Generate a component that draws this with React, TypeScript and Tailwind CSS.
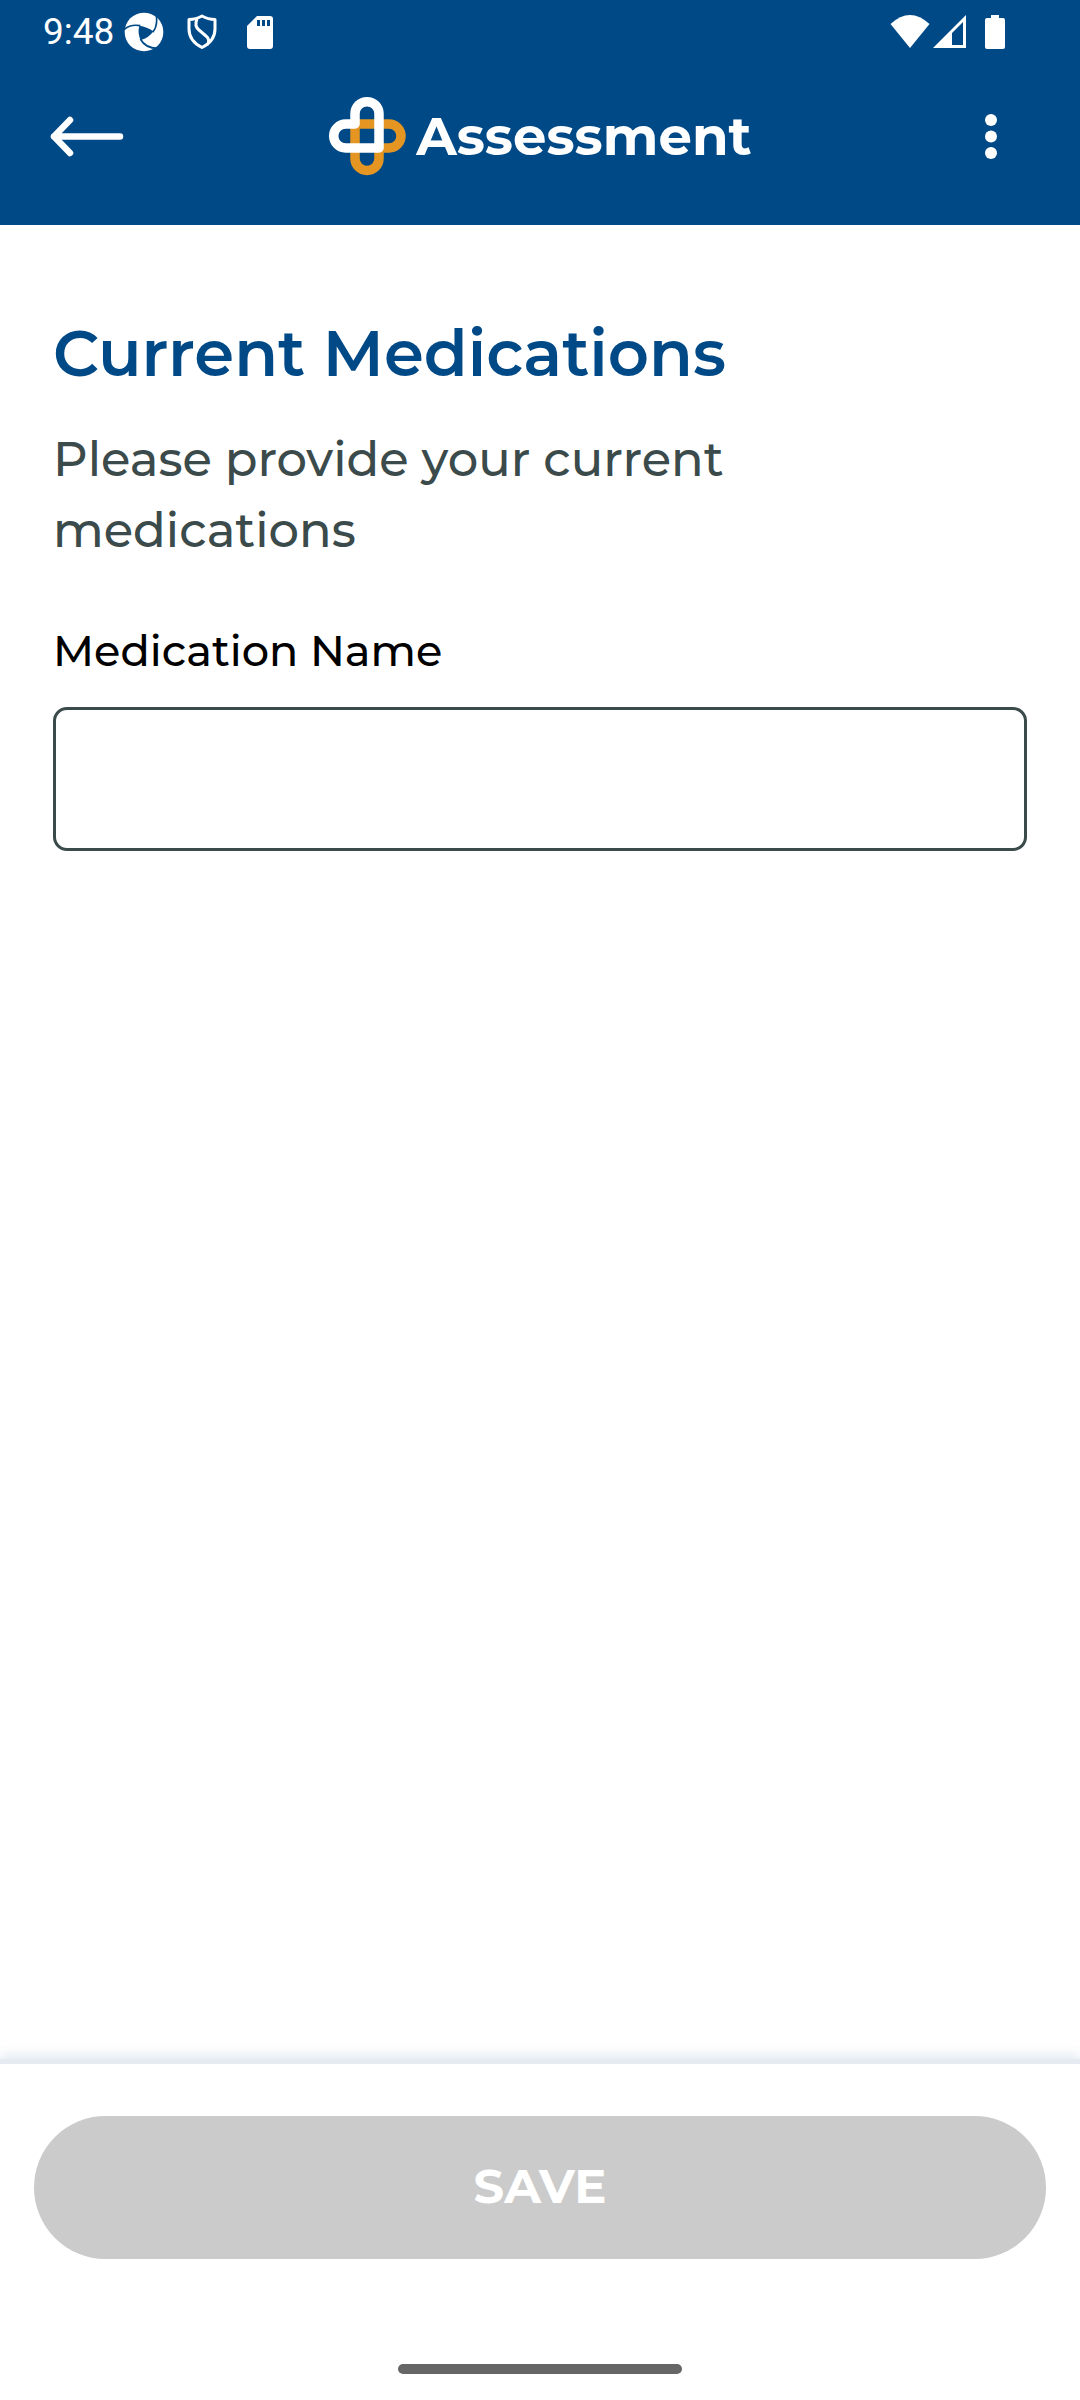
function StatusBar() {
  return (
    <div className="flex h-16 items-center justify-between pl-[43px] pr-[73px]">
      <div className="flex items-center">
        <span className="mr-2.5 font-['Roboto',sans-serif] text-[37px]">9:48</span>
        <svg className="mr-[22px] h-10 w-10" viewBox="371 34 120 120" aria-hidden="true">
          <circle cx="431" cy="94" r="58" fill="#fff" />
          <path d="M417 75Q440 78 459 92Q446 112 421 118Q411 98 417 75Z" fill="#004987" />
          <path
            d="M372 86Q390 70 420 75M457 95Q474 74 467 38M420 115Q438 148 486 142"
            fill="none"
            stroke="#004987"
            strokeWidth="5"
          />
        </svg>
        <svg className="mr-7 h-9 w-8" viewBox="0 0 32 36" fill="none" stroke="#fff" aria-hidden="true">
          <path
            d="M16 2Q22 5.500 29 5.500V15Q29 27 16 33.500Q3 27 3 15V5.500Q10 5.500 16 2ZM11 5Q8 12 13 16L20 22Q25 26 21 31"
            strokeWidth="3"
            strokeLinejoin="round"
          />
        </svg>
        <svg className="h-9 w-7" viewBox="0 0 28 36" aria-hidden="true">
          <path d="M11 2H24Q27 2 27 5V32Q27 35 24 35H4Q1 35 1 32V12Z" fill="#fff" />
          <path d="M11 6h3v6h-3zM16 6h3v6h-3zM21 6h3v6h-3z" fill="#004987" />
        </svg>
      </div>
      <div className="flex items-center">
        <svg className="mr-0.5 h-9 w-10" viewBox="0 0 40 36" aria-hidden="true">
          <path d="M0.500 10Q20 -8 39.500 10L20 34Z" fill="#fff" />
        </svg>
        <svg className="mr-[15px] h-9 w-9" viewBox="0 0 36 36" aria-hidden="true">
          <path fillRule="evenodd" d="M1 34 34 1V34ZM20 19V31H31V8Z" fill="#fff" />
        </svg>
        <svg className="h-9 w-6" viewBox="0 0 24 36" aria-hidden="true">
          <path d="M8 1h8v3h4q2 0 2 2v27q0 2-2 2H4q-2 0-2-2V6q0-2 2-2h4Z" fill="#fff" />
        </svg>
      </div>
    </div>
  );
}

function AppBar() {
  return (
    <div className="flex h-36 items-center justify-between px-11">
      <button type="button" aria-label="Back" className="h-20 w-21">
        <svg className="h-20 w-21" viewBox="0 0 84 80" fill="none" stroke="#fff" aria-hidden="true">
          <path
            d="M26 24 10 40.500 26 57M10 40.500H76"
            strokeWidth="6.500"
            strokeLinecap="round"
            strokeLinejoin="round"
          />
        </svg>
      </button>
      <div className="flex items-center gap-2">
        <svg className="h-20 w-20" viewBox="0 0 80 80" fill="none" strokeWidth="9.500" aria-hidden="true">
          <path
            d="M27 62.500V28H61A12 12 0 0 1 61 52H51V62.500A12 12 0 0 1 27 62.500Z"
            stroke="#e59622"
          />
          <path
            d="M27 28V17.700A12 12 0 0 1 51 17.700V52H17.700A12 12 0 0 1 17.700 28Z"
            stroke="#fff"
            strokeLinejoin="round"
          />
        </svg>
        <h1 className="text-[53px] leading-none font-bold">Assessment</h1>
      </div>
      <button type="button" aria-label="More options" className="h-20 w-21">
        <svg className="h-20 w-21" viewBox="0 0 84 80" fill="#fff" aria-hidden="true">
          <circle cx="39" cy="24" r="6" />
          <circle cx="39" cy="40.500" r="6" />
          <circle cx="39" cy="57" r="6" />
        </svg>
      </button>
    </div>
  );
}

export default function App() {
  return (
    <div className="flex min-h-screen flex-col bg-white font-['Montserrat','Inter',sans-serif]">
      <header className="bg-[#004987] pb-[17px] text-white">
        <StatusBar />
        <AppBar />
      </header>
      <main className="flex-1 px-[53px] pt-[88px]">
        <h2 className="text-[64px] leading-[80px] font-semibold text-[#004987]">Current Medications</h2>
        <p className="mt-[31px] text-[48px] leading-[71px] font-medium text-[#3b4a4a]">
          Please provide your current medications
        </p>
        <label htmlFor="medication" className="mt-[53px] block text-[43px] leading-[64px] font-medium text-black">
          Medication Name
        </label>
        <input
          id="medication"
          type="text"
          className="mt-6 block h-36 w-full rounded-[14px] border-[3px] border-[#3b4a4a] px-8 text-[43px] outline-none"
        />
      </main>
      <footer className="border-t-[5px] border-[#e6ebf2] bg-white px-[34px] pt-[52px] shadow-[0_-4px_12px_rgba(0,73,135,0.12)]">
        <button
          type="button"
          disabled
          className="block h-[143px] w-full rounded-full bg-[#cbcbcb] pb-1 text-[48px] font-bold text-white"
        >
          SAVE
        </button>
        <div className="mx-auto mt-[105px] mb-[26px] h-2.5 w-71 rounded-full bg-[#666666]" />
      </footer>
    </div>
  );
}
